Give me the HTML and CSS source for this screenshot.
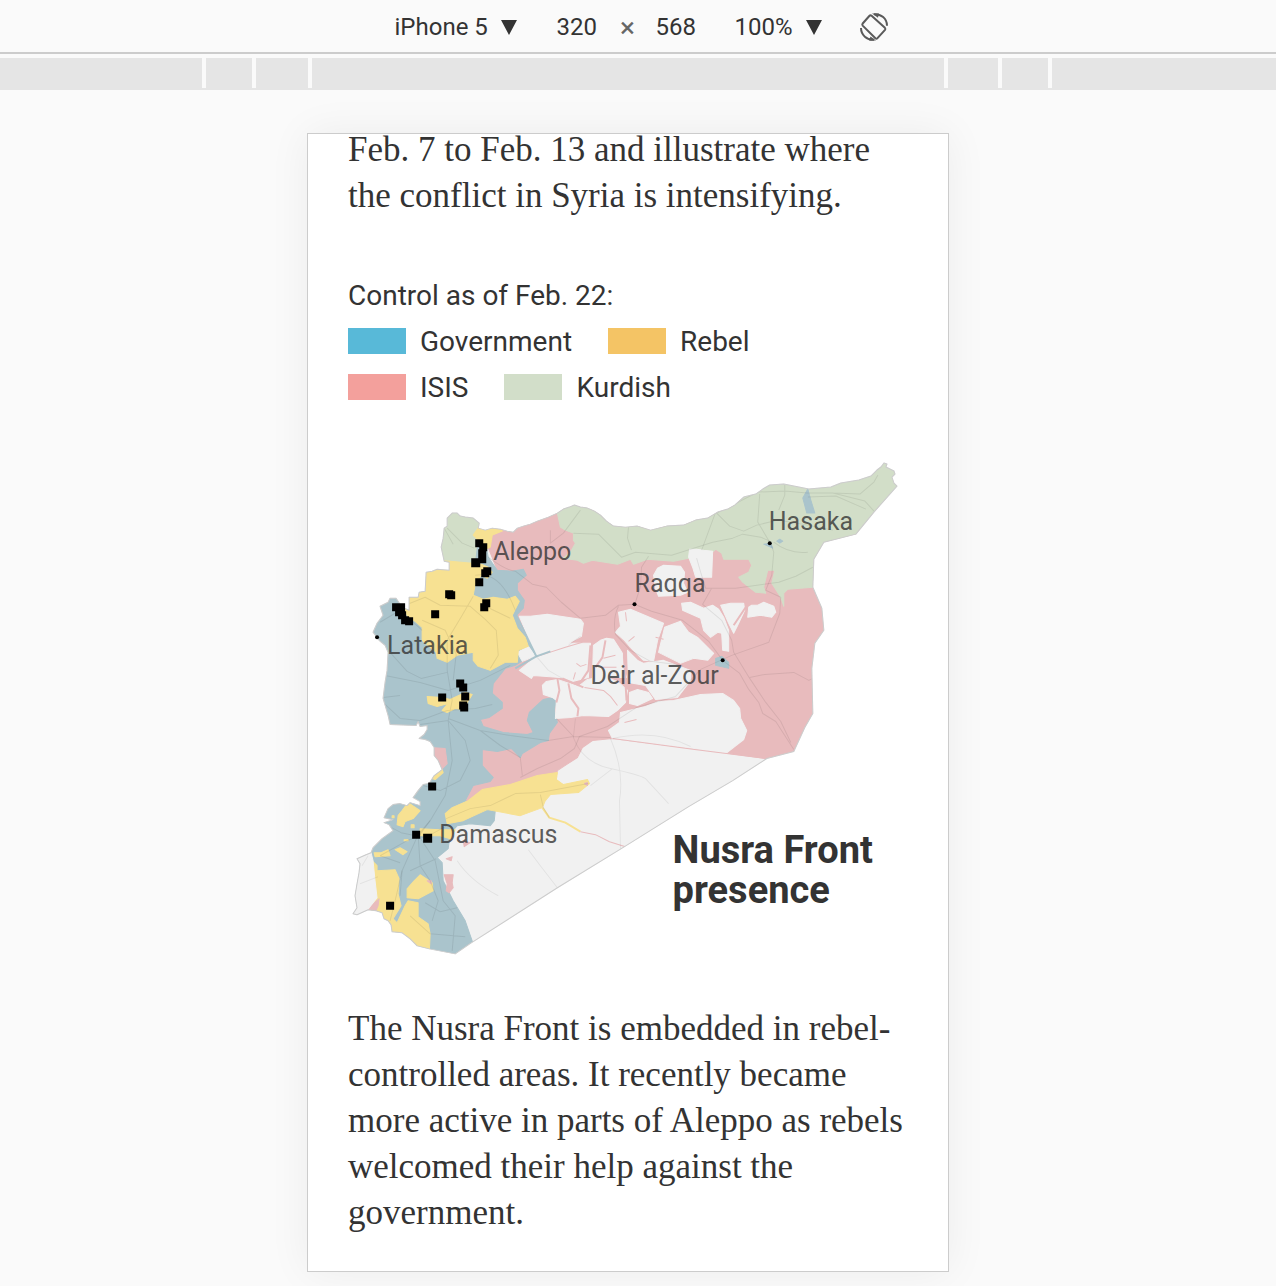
FILE: index.html
```html
<!DOCTYPE html>
<html lang="en">
<head>
<meta charset="utf-8">
<meta name="viewport" content="width=device-width, initial-scale=1">
<title>Device preview</title>
<link rel="stylesheet" href="styles.css">
</head>
<body>
<header class="toolbar">
  <label class="picker picker-device">
    <select aria-label="Device"><option>iPhone 5</option></select>
    <svg class="arrow" viewBox="0 0 16 16" aria-hidden="true"><path d="M0 1h16L8 16z"/></svg>
  </label>
  <div class="size">
    <input type="text" value="320" aria-label="Width">
    <span class="times">×</span>
    <input type="text" value="568" aria-label="Height">
  </div>
  <label class="picker picker-zoom">
    <select aria-label="Zoom"><option>100%</option></select>
    <svg class="arrow" viewBox="0 0 16 16" aria-hidden="true"><path d="M0 1h16L8 16z"/></svg>
  </label>
  <button class="rotate" type="button" aria-label="Rotate">
    <svg viewBox="0 0 28 28" aria-hidden="true">
      <path class="thin" d="M9.300 3 2.700 10.500Q1.800 11.600 2.700 12.600L15.400 25.300Q16.500 26.300 17.500 25.200L25 16.800Q25.800 15.800 24.900 14.800L11.600 2.800Q10.400 1.800 9.300 3z"/>
      <path class="thin" d="M14 1.200C21 .8 27 5.500 27 12.700M14 26.800C7 27.200 1 22 1 15"/>
      <path class="tip" d="M12 .6 19 .6 18 4.800zM16 27.400 9 27.400 10.500 23.400z"/>
    </svg>
  </button>
</header>
<div class="ruler" aria-hidden="true">
  <span></span><span></span><span></span><span></span><span></span><span></span><span class="ruler-end"></span>
</div>
<main class="stage">
  <article class="screen">
    <p class="copy intro">Feb. 7 to Feb. 13 and illustrate where<br>the conflict in Syria is intensifying.</p>
    <section class="legend">
      <h2>Control as of Feb. 22:</h2>
      <ul>
        <li><i class="swatch government"></i>Government</li>
        <li><i class="swatch rebel"></i>Rebel</li>
        <li><i class="swatch isis"></i>ISIS</li>
        <li><i class="swatch kurdish"></i>Kurdish</li>
      </ul>
    </section>
    <svg class="map" viewBox="348 456 560 504" role="img" aria-label="Map of Nusra Front presence in Syria">
      <defs>
        <path id="outline" d="M452 513 457 513 460 516 465 517 473 518 479 523 478 528 485 530 492 528 500 529 507 531 513 532 517 528 523 526 530 524 537 521 548 517 557 513 563 509 569 507 574 505 580 507 587 508 594 511 600 515 606 521 613 526 625 527 637 526 650 530 666 526 683 525 695 520 707 518 717 512 727 509 734 505 743 497 755 494 762 489 769 485 783 484 793 486 803 488 808 489 830 487 840 483 858 480 870 476 876 470 880 467 883 463 886 464 885 467 893 471 894 474 891 477 893 483 896 486 873 512 855 534 823 542 813 559 812 587 821 608 823 630 814 643 811 668 812 713 804 727 793 751 766 758 732 780 688 806 624 846 557 887 471 942 455 953 429 948 417 945 410 938 402 932 392 931 391 924 388 920 384 918 382 912 376 910 368 909 357 914 353 913 357 907 355 895 357 883 359 872 360 863 357 858 366 854 371 852 373 847 382 838 393 830 389 824 384 822 393 819 384 817 388 808 393 804 400 803 407 805 410 802 420 805 420 801 413 797 418 790 423 784 429 783 434 775 442 769 438 760 434 755 434 747 430 741 425 739 419 738 424 734 427 729 427 725 420 726 418 721 416 725 390 724 388 715 383 698 385 682 387 670 388 652 385 645 379 640 377 637 373 632 377 623 383 615 380 606 388 602 390 598 396 598 402 607 409 610 409 597 418 597 419 592 425 591 426 572 432 571 437 569 449 570 449 562 444 561 441 547 443 538 444 528 447 526 447 518z"/>
        <clipPath id="country"><use href="#outline"/></clipPath>
      </defs>
      <use class="open" href="#outline"/>
      <g clip-path="url(#country)">
        <path class="z-isis" d="M485 540 505 500 900 500 900 770 766 758 700 749 612 738 592 740 582 747 577 757 563 766 557 770 555 780 500 795 460 802 460 640 513 615 517 590 497 570z"/>
        <path class="z-kurdish" d="M557 500 557 513 560 527 565 530 573 533 573 540 575 543 570 552 563 558 577 560 583 563 592 560 617 564 630 559 633 564 647 559 673 561 688 558 713 551 715 549 721 553 723 559 748 559 751 565 748 572 738 577 742 582 755 592 765 593 763 587 767 570 774 570 771 583 780 597 783 606 783 593 787 589 812 587 920 560 920 450z"/>
        <path class="z-kurdish" d="M430 500V561H450L472 563 477 555 475 537 480 528 490 500z"/>
        <path class="z-gov" d="M477 548 485 543 488 557 497 570 512 571 523 569 526 575 517 583 517 590 524 600 523 608 516 615 520 627 536 656 526 658 515 665 505 668 493 683 492 693 502 702 502 708 489 717 480 719 483 726 503 732 527 734 533 732 527 720 529 712 543 699 552 697 556 700 554 710 557 722 549 733 548 740 540 742 522 753 520 757 511 748 497 751 482 749 482 765 493 777 490 781 473 785 465 800 480 806 495 810 494 820 490 825 470 823 457 825 450 833 448 848 437 857 442 862 443 880 453 900 465 920 474 946 465 960 350 960 350 595 410 590 473 590 475 565z"/>
        <path class="z-gov" d="M807 489 810 500 814 513 806 513 802 498zM776 541 779 539 782 541 779 543zM763 544 770 543 772 548zM715 658 721 656 728 662 728 668 715 665z"/>
        <path class="open" d="M517 652 528 646 535 656 522 661z"/>
        <path class="z-rebel" d="M450 561 472 563 481 564 488 567 492 572 487 578 481 575 475 584 473 595 483 599 493 597 507 599 515 596 519 601 512 615 517 628 525 637 528 646 518 650 517 662 505 662 490 670 478 666 473 660 473 652 457 655 447 662 437 658 436 652 422 640 422 627 415 621 408 617 400 600 410 590 420 560z"/>
        <path class="z-rebel" d="M473 535 480 525 500 524 502 531 492 535 490 547 484 550 476 538zM427 696 442 697 450 699 465 692 472 694 467 702 462 709 455 708 447 712 442 710 448 703 437 706 428 703zM432 778 442 769 443 772 435 779zM408 802 420 810 413 818 405 821 403 826 397 824 398 815 402 810z"/>
        <path class="z-rebel" d="M557 772 556 779 563 784 587 779 589 783 578 792 550 794 545 800 542 807 520 815 487 809 463 820 447 823 445 813 452 807 468 800 482 789 510 784 537 775zM420 828 440 829 455 829 450 838 440 835 420 835zM374 852 381 852 388 849 390 855 375 856zM395 849 400 847 407 851 403 854z"/>
        <path class="z-rebel" d="M372 860 377 865 377 870 395 869 399 878 398 893 401 905 393 918 397 922 405 905 408 900 418 902 418 916 428 923 430 933 429 955 385 955 365 900 377 897 375 880zM407 897 407 888 414 880 420 874 432 882 433 890 418 898zM411 824h3v3h-3zM392 815h2v2h-2zM404 839h4v1h-4z"/>
        <path class="z-isis" d="M430 747 445 748 447 763 440 770zM444 874 453 874 452 882 453 887 449 892 446 890 447 883zM366 909 379 898 378 905 375 912zM446 858 452 856 451 860zM463 840 470 842 464 846zM427 880 431 880 431 883zM584 783l3-1v3z"/>
        <path class="open" d="M350 850 371 852 373 860 375 880 377 897 366 911 350 918z"/>
        <path class="open" d="M519 616 530 616 547 614 560 616 580 619 583 623 581 636 568 643 590 643 588 677 572 681 560 677 533 675 531 678 519 670 536 656zM542 685 546 681 557 679 578 686 587 679 603 676 617 681 627 690 625 702 617 710 608 716 583 715 570 717 555 718 556 700 552 697 543 694zM600 640 606 638 613 639 622 653 623 667 626 677 592 677 593 645zM618 612 630 609 663 623 657 640 653 661 643 660 630 647 624 640 615 632 620 626zM664 627 680 621 688 632 697 637 713 653 707 660 693 658 680 663 658 652zM627 650 637 660 643 663 663 660 690 670 690 680 677 697 655 699 645 685 628 682zM629 692 637 689 648 692 652 698 637 705 629 703z"/>
        <path class="open" d="M681 603 690 602 703 608 712 605 718 609 723 617 728 630 728 651 722 650 721 633 717 632 710 637 703 630 700 618 682 610zM720 605 730 603 743 603 744 610 737 625 733 633 728 623zM748 607 751 605 757 605 763 602 773 606 775 612 771 617 760 615 747 617zM653 575 657 568 663 565 680 566 684 572 683 583 687 592 680 595 658 596 655 588zM688 557 689 549 696 549 703 550 712 551 711 577 695 577 692 567z"/>
        <path class="open" d="M612 738 608 730 619 722 620 712 645 706 658 701 673 700 700 694 722 693 733 700 739 708 740 718 746 730 743 739 725 753 693 748z"/>
        <path class="pink-road" d="M590 645 588 670 580 682M605 640 602 657 595 667M623 645 626 700M557 678 559 690 556 702M562 678 583 687M568 683 571 698 578 708 577 716M745 607 733 625"/>
        <path class="pink-road fine" d="M612 738 694 749 766 758M576 663 580 666 586 664M573 679 575 672M603 658 615 655M600 667 616 667M624 722 636 719M584 687 603 690 610 696 617 705M626 621 625 612M628 641 634 636M537 656 565 647 582 642M655 637 663 639"/>
        <path class="blue-road" d="M516 615 536 656 515 668M536 656 550 651"/>
        <path class="yellow-road" d="M542 807 549 817 565 822 580 831"/>
        <path class="pink-road fine" d="M580 831 595 834 609 841 625 846"/>
        <path class="road" d="M488 557Q505 570 515 571L532 584 546 587 561 602 580 618 605 615 618 605 634 604 651 611 682 620 696 631 708 641 722 660 739 673 748 689 758 702 762 713 775 721 784 735 793 749M634 605 640 586 641 567 648 556M618 606Q612 618 615 634L630 650 650 661 682 665M550 530 550 543 563 533 580 510M573 533 598 534 621 557 635 552 671 555 712 542 732 538 742 534 760 537 769 541 773 552 771 575 765 590 780 597 779 613 768 642 731 655 700 669 675 696 636 707 607 726 579 736 574 748 560 758 537 768 520 777"/>
        <path class="road" d="M628 527 627 538 631 550M701 550 715 512 729 526 743 531 756 525 777 520 807 525 832 530M759 494 757 522 769 542M784 485 784 495 778 510M716 513 732 505 757 492 784 491 806 493 832 493 864 501 873 511M832 493 859 494 873 482 877 475M807 497 835 496 865 509M773 542Q788 554 807 552M812 567 795 576 778 582 735 588 705 588 700 572 696 558M711 588 702 604 721 620 731 640 733 652 749 678 765 702 780 721 790 742M749 677 764 674 793 672 808 680 812 678"/>
        <path class="road" d="M447 528 462 543 474 548M444 528 453 544M405 605 425 597 440 605 470 606 485 619 496 630 498 655 490 668M473 596 462 615 447 640 447 670 452 700 448 720 452 760 445 795 430 820 418 834 402 870 400 895M483 605 510 618M422 620 445 630 456 654 453 680M380 622 400 610 422 630M390 652 407 671 421 678 447 672M385 675 420 682 448 690 480 680 510 665M385 704 400 718 420 720 447 710 475 708 492 704M448 718 480 730 510 735 548 740 573 736 610 737M448 720 465 740 470 760 460 780 440 790M480 730 500 745 520 757 522 775M556 718 573 736M420 724 448 720M475 575Q500 570 515 610"/>
        <path class="road faint" d="M575 718 573 737Q582 762 610 768T645 778L668 803M610 738Q624 770 619 800L620 848M590 785 612 768M612 738Q655 728 690 746M536 656 548 670 562 678M568 645 580 636M457 860Q470 880 498 895M528 849 540 865 557 887M360 883 378 876M362 865 368 855"/>
        <path class="road" d="M446 818 470 808 490 805 515 793 540 792 588 783M540 794 543 807 549 817M447 825 425 837 401 832 382 822M418 834 435 860 443 900 455 915 452 950M430 820 419 835 407 840 380 855M402 870 395 900 390 920M418 834 420 865 430 880 438 900 432 920M410 870 436 858M425 902 440 911 457 907M410 915 430 933 465 936M380 855 400 862M400 695 383 697M423 785 440 790"/>
      </g>
      <use class="border" href="#outline"/>
      <path class="event" d="M475 539h8v8h-8zM479 543h8v8h-8zM478 549h8v8h-8zM478 555h8v8h-8zM471 558h9v9h-9zM483 567h8v8h-8zM481 569h8v8h-8zM475 578h8v8h-8zM482 599h8v8h-8zM480 603h8v8h-8zM445 590h8v8h-8zM447 591h8v8h-8zM431 610h8v8h-8zM392 603h8v8h-8zM397 603h8v8h-8zM395 608h8v8h-8zM398 611h8v8h-8zM401 616h8v8h-8zM405 617h8v8h-8zM438 693h8v8h-8zM456 679h8v8h-8zM459 683h8v8h-8zM461 692h8v8h-8zM459 701h8v8h-8zM460 703h8v8h-8zM428 782h8v8h-8zM412 830h8v8h-8zM423 833h9v9h-9zM386 901h8v8h-8z"/>
      <g class="city-dot"><circle cx="769" cy="543" r="2"/><circle cx="634" cy="604" r="2"/><circle cx="722" cy="660" r="2"/><circle cx="377" cy="637" r="2"/></g>
      <g class="city">
        <text x="768" y="530">Hasaka</text><text x="493" y="560">Aleppo</text><text x="634" y="592">Raqqa</text><text x="387" y="654">Latakia</text><text x="590" y="684">Deir al-Zour</text><text x="439" y="842">Damascus</text>
      </g>
      <g class="map-title"><text x="672" y="862">Nusra Front</text><text x="672" y="902">presence</text></g>
    </svg>
    <p class="copy">The Nusra Front is embedded in rebel-<br>controlled areas. It recently became<br>more active in parts of Aleppo as rebels<br>welcomed their help against the<br>government.</p>
  </article>
</main>
</body>
</html>
```
FILE: styles.css
```css
* { box-sizing: border-box; }
body {
  margin: 0;
  background: #fafafa;
  color: #333;
  font-family: Roboto, "Liberation Sans", sans-serif;
}
.toolbar {
  display: flex;
  justify-content: center;
  align-items: center;
  height: 54px;
  padding-top: 2px;
  padding-left: 6px;
  border-bottom: 2px solid #ccc;
  font-size: 24px;
}
.picker { display: flex; align-items: center; gap: 12px; }
.picker-device { margin-right: 40px; }
.picker-zoom { margin-right: 38px; }
.toolbar select, .toolbar input {
  appearance: none;
  margin: 0;
  padding: 0;
  border: 0;
  background: none;
  color: inherit;
  font: inherit;
}
.arrow { width: 16px; height: 16px; fill: #333; }
.size { display: flex; align-items: center; margin-right: 36px; }
.size input { width: 43px; }
.times { width: 56px; text-align: center; font-size: 28px; color: #666; }
.rotate {
  width: 28px;
  height: 28px;
  padding: 0;
  border: 0;
  background: none;
}
.rotate svg { display: block; width: 28px; height: 28px; }
.thin { fill: none; stroke: #5a5a5a; stroke-width: 2; }
.tip { fill: #5a5a5a; }
.ruler {
  display: grid;
  grid-template-columns: 1fr 46px 52px 632px 50px 46px 1fr;
  gap: 4px;
  height: 32px;
  margin-top: 4px;
  padding-right: 22px;
  border-bottom: 2px solid #e5e5e5;
}
.ruler span { background: #e5e5e5; }
.ruler .ruler-end { margin-right: -22px; }
.stage { display: flex; justify-content: center; padding: 43px 20px 15px 0; }
.screen {
  width: 642px;
  padding: 0 39px 35px 40px;
  overflow: hidden;
  border: 1px solid #ccc;
  background: #fff;
  box-shadow: 0 0 40px rgba(0, 0, 0, .06);
}
.copy {
  margin: 0;
  font: 35px/46px Georgia, "Liberation Serif", serif;
  white-space: nowrap;
}
.intro { margin-top: -7px; }
.legend { margin-top: 54px; font-size: 28px; line-height: 46px; }
.legend h2 { margin: 0; font-size: inherit; font-weight: 400; }
.legend ul {
  display: flex;
  flex-wrap: wrap;
  column-gap: 36px;
  width: 440px;
  margin: 0;
  padding: 0;
  list-style: none;
}
.legend li { display: flex; align-items: center; gap: 14px; }
.swatch { width: 58px; height: 26px; margin-bottom: 2px; }
.government { background: #58b9d8; }
.rebel { background: #f4c465; }
.isis { background: #f3a09c; }
.kurdish { background: #d2dec9; }
.map { display: block; width: 100%; margin: 45px 0; }
.open { fill: #f1f1f1; stroke: #f1f1f1; stroke-width: 1; stroke-linejoin: round; }
.border { fill: none; stroke: #ccc; stroke-width: 1; stroke-linejoin: round; }
.z-isis, .z-kurdish, .z-gov, .z-rebel { stroke-width: 1; stroke-linejoin: round; }
.z-isis { fill: #e8bbbd; stroke: #e8bbbd; }
.z-kurdish { fill: #d2dec8; stroke: #d2dec8; }
.z-gov { fill: #aac4cc; stroke: #aac4cc; }
.z-rebel { fill: #f7e192; stroke: #f7e192; }
.road { fill: none; stroke: #000; stroke-opacity: .08; stroke-width: 1; stroke-linejoin: round; }
.road.faint { stroke-opacity: .06; }
.pink-road { fill: none; stroke: #e8bbbd; stroke-width: 2; stroke-linejoin: round; }
.pink-road.fine { stroke-width: 1; }
.blue-road { fill: none; stroke: #aac4cc; stroke-width: 2; }
.yellow-road { fill: none; stroke: #f7e192; stroke-width: 2; }
.city { font-size: 25px; fill: #333; fill-opacity: .8; }
.map-title { font-size: 38px; font-weight: 700; fill: #333; }
```
